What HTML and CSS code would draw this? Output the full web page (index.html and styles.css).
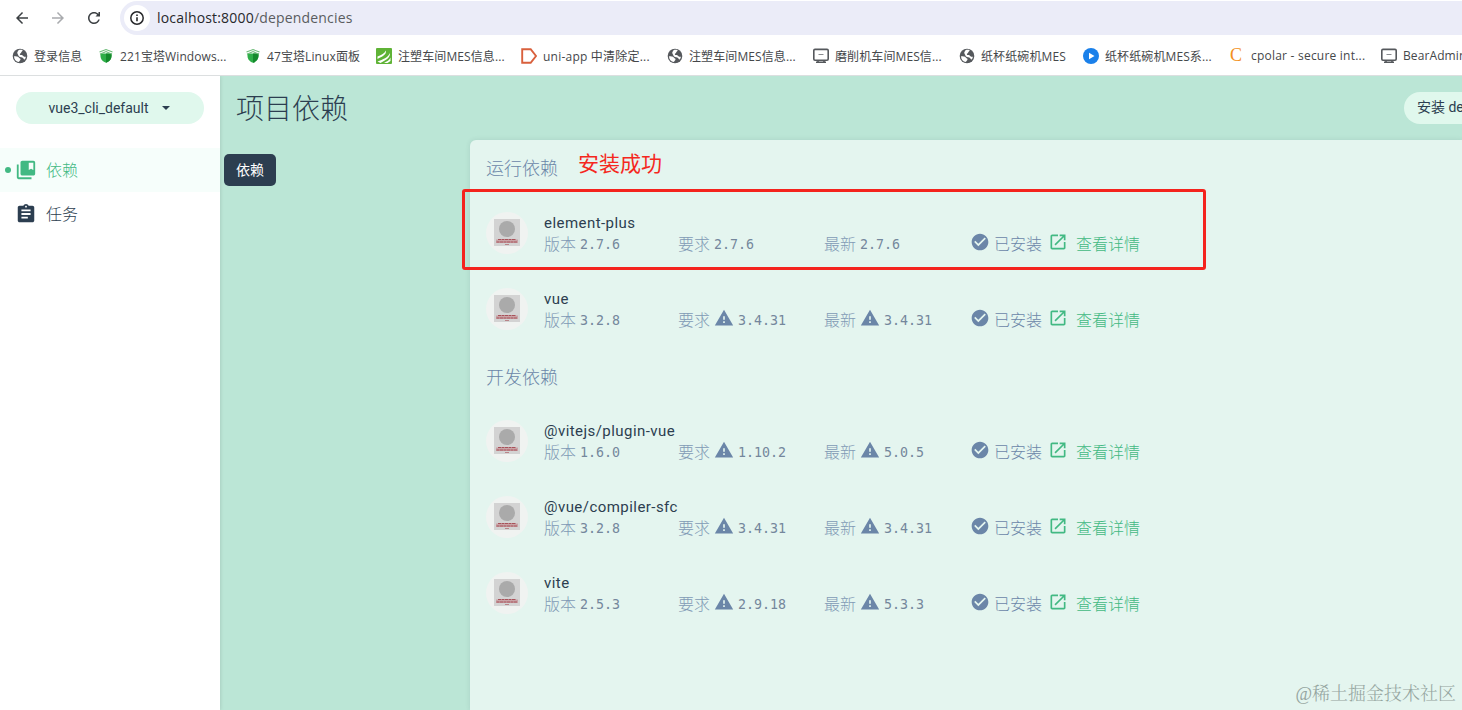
FILE: index.html
```html
<!DOCTYPE html>
<html lang="zh-CN">
<head>
    <meta charset="UTF-8">
    <title>项目依赖</title>
    <link rel="stylesheet" href="styles.css">
</head>
<body>

<!-- shared icons -->
<svg class="sprite" width="0" height="0">
    <symbol id="globe" viewBox="0 0 16 16">
        <circle cx="8" cy="8" r="7.3" fill="#55585c"/>
        <path d="M2 8.300c2 .2 4.200-.2 4.800 1.200.5 1 2 .7 1.700 2-.3 1-1.200 1.300-1.500 2.600C4 13.700 2 11.500 2 8.300zM6.500 2.200c1.200-.5 3-.5 4.200.1-.3 1.300-1.400 1.300-1.500 2.200-.2 1-1.500.8-1.300 1.900.2.800 1.800.2 2.500.9.700.8 1.400 1.700 3.500 1.500-.1 1-.5 2-1.200 2.700-1.200.1-1.300-1.600-2.400-1.900-1.600-.3-3.300-.5-3.800-1.800C6.100 6.500 5 5.500 5.300 4.300z" fill="#fff"/>
    </symbol>
    <symbol id="pot" viewBox="0 0 16 16">
        <path d="M2.500 5.500h11c.4 4.500-.8 7.500-5.500 9.300C3.300 13 2.100 10 2.500 5.500z" fill="#2eae48"/>
        <path d="M8 5.500h5.500c.4 4.500-.8 7.500-5.500 9.300z" fill="#148a2c"/>
        <path d="M1.500 4L8 1.600 14.500 4M2 6.200L8 3.600l6 2.600" stroke="#6cbb78" stroke-width="1.100" fill="none"/>
    </symbol>
    <symbol id="screen" viewBox="0 0 16 16">
        <rect x=".8" y="1.400" width="14.400" height="10.800" rx="1.200" fill="none" stroke="#55585c" stroke-width="1.600"/>
        <path d="M5.500 6.500h5" stroke="#8a8c90" stroke-width="1"/>
        <path d="M3 14.300h10M5 12.500v2M11 12.500v2" stroke="#55585c" stroke-width="1.600"/>
    </symbol>
    <symbol id="warning" viewBox="0 0 24 24">
        <path d="M1 21h22L12 2 1 21zm12-3h-2v-2h2v2zm0-4h-2v-4h2v4z"/>
    </symbol>
    <symbol id="check" viewBox="0 0 24 24">
        <path d="M12 2C6.480 2 2 6.480 2 12s4.480 10 10 10 10-4.480 10-10S17.520 2 12 2zm-2 15l-5-5 1.410-1.410L10 14.170l7.590-7.590L19 8l-9 9z"/>
    </symbol>
    <symbol id="open" viewBox="0 0 24 24">
        <path d="M19 19H5V5h7V3H5c-1.110 0-2 .9-2 2v14c0 1.100.89 2 2 2h14c1.100 0 2-.9 2-2v-7h-2v7zM14 3v2h3.590l-9.830 9.830 1.410 1.410L19 6.410V10h2V3h-7z"/>
    </symbol>
    <symbol id="avatar" viewBox="0 0 42 42">
        <circle cx="21" cy="21" r="21" fill="#f0f3f1"/>
        <rect x="8" y="7" width="26" height="27" fill="#d3d3d3"/>
        <circle cx="21" cy="17" r="8" fill="#aaa"/>
        <path d="M10 27.500h22v3.500H10z" fill="#c9a3a6"/>
        <path d="M12 27.500h18M10.500 30h21" stroke="#a8525a" stroke-width="1.200" stroke-dasharray="3 .5"/>
        <path d="M19 32.500h4" stroke="#b98488"/>
    </symbol>
</svg>

<div class="toolbar">
    <svg class="nav-icon" viewBox="0 0 24 24"><path d="M20 11H7.830l5.590-5.590L12 4l-8 8 8 8 1.410-1.410L7.830 13H20v-2z"/></svg>
    <svg class="nav-icon disabled" viewBox="0 0 24 24"><path d="M12 4l-1.410 1.410L16.170 11H4v2h12.170l-5.580 5.590L12 20l8-8z"/></svg>
    <svg class="nav-icon" viewBox="0 0 24 24"><path d="M17.650 6.350C16.200 4.900 14.210 4 12 4c-4.420 0-8 3.580-8 8s3.580 8 8 8c3.730 0 6.840-2.550 7.730-6h-2.080c-.82 2.330-3.040 4-5.650 4-3.310 0-6-2.690-6-6s2.690-6 6-6c1.660 0 3.140.69 4.220 1.780L14 10h6V4h-2v2z"/></svg>
    <div class="address">
        <span class="info">
            <svg width="16" height="16" viewBox="0 0 16 16"><circle cx="8" cy="8" r="6.200" fill="none" stroke="#27282b" stroke-width="1.500"/><path d="M8 7.200v4M8 4.500v1.500" stroke="#27282b" stroke-width="1.600"/></svg>
        </span>
        <span class="url"><b>localhost:8000</b>/dependencies</span>
    </div>
</div>

<div class="bookmarks">
    <a><svg><use href="#globe"/></svg>登录信息</a>
    <a><svg><use href="#pot"/></svg>221宝塔Windows...</a>
    <a><svg><use href="#pot"/></svg>47宝塔Linux面板</a>
    <a>
        <svg viewBox="0 0 16 16"><rect width="16" height="16" rx="1" fill="#5fb336"/><path d="M1.500 8.500C5 7 8 6 10 2.500 10.500 7 6 8.500 1.500 11zM1.500 13.500C7 11.500 12 9.500 14 5c.5 5-5 7.500-9.500 10z" fill="#fff"/><path d="M8 15c3-1.500 5.500-3 6.500-5.500V13l-3 2z" fill="#fff"/></svg>
        注塑车间MES信息...
    </a>
    <a class="latin"><svg viewBox="0 0 16 16"><path d="M1.200 1.200h8.500L15 8l-5.300 6.800H1.200z" fill="none" stroke="#d9603d" stroke-width="1.900"/></svg>uni-app 中清除定...</a>
    <a><svg><use href="#globe"/></svg>注塑车间MES信息...</a>
    <a><svg><use href="#screen"/></svg>磨削机车间MES信...</a>
    <a><svg><use href="#globe"/></svg>纸杯纸碗机MES</a>
    <a><svg viewBox="0 0 16 16"><circle cx="8" cy="8" r="8" fill="#1a80ea"/><path d="M6 4.700v6.600L11.500 8z" fill="#fff"/></svg>纸杯纸碗机MES系...</a>
    <a class="latin"><i class="cpolar">C</i>cpolar - secure int...</a>
    <a><svg><use href="#screen"/></svg>BearAdmin</a>
</div>

<div class="app">
    <div class="sidebar">
        <div class="project">vue3_cli_default <i class="arrow"></i></div>
        <div class="menu-item active">
            <i class="dot"></i>
            <svg viewBox="0 0 24 24"><path d="M4 6H2v14c0 1.100.9 2 2 2h14v-2H4V6z"/><path d="M20 2H8c-1.100 0-2 .9-2 2v12c0 1.100.9 2 2 2h12c1.100 0 2-.9 2-2V4c0-1.100-.9-2-2-2zm0 10l-2.500-1.500L15 12V4h5v8z"/></svg>
            <span class="label">依赖</span>
            <span class="tooltip">依赖</span>
        </div>
        <div class="menu-item">
            <svg viewBox="0 0 24 24"><path d="M19 3h-4.180C14.400 1.840 13.300 1 12 1c-1.300 0-2.400.84-2.820 2H5c-1.100 0-2 .9-2 2v14c0 1.100.9 2 2 2h14c1.100 0 2-.9 2-2V5c0-1.100-.9-2-2-2zm-7 0c.55 0 1 .45 1 1s-.45 1-1 1-1-.45-1-1 .45-1 1-1zm2 14H7v-2h7v2zm3-4H7v-2h10v2zm0-4H7V7h10v2z"/></svg>
            <span class="label">任务</span>
        </div>
    </div>

    <div class="main">
        <div class="header">
            <h1>项目依赖</h1>
            <div class="install">安装 devtools</div>
        </div>

        <div class="panel">
            <h2>运行依赖</h2>
            <div class="dep">
                <svg class="avatar"><use href="#avatar"/></svg>
                <div class="content">
                    <div class="name">element-plus</div>
                    <div class="info-row">
                        <div>版本 <code>2.7.6</code></div>
                        <div>要求 <code>2.7.6</code></div>
                        <div>最新 <code>2.7.6</code></div>
                        <div class="installed"><svg><use href="#check"/></svg>已安装</div>
                        <div class="link"><svg><use href="#open"/></svg>查看详情</div>
                    </div>
                </div>
            </div>
            <div class="dep">
                <svg class="avatar"><use href="#avatar"/></svg>
                <div class="content">
                    <div class="name">vue</div>
                    <div class="info-row">
                        <div>版本 <code>3.2.8</code></div>
                        <div>要求 <svg><use href="#warning"/></svg><code>3.4.31</code></div>
                        <div>最新 <svg><use href="#warning"/></svg><code>3.4.31</code></div>
                        <div class="installed"><svg><use href="#check"/></svg>已安装</div>
                        <div class="link"><svg><use href="#open"/></svg>查看详情</div>
                    </div>
                </div>
            </div>

            <h2>开发依赖</h2>
            <div class="dep">
                <svg class="avatar"><use href="#avatar"/></svg>
                <div class="content">
                    <div class="name">@vitejs/plugin-vue</div>
                    <div class="info-row">
                        <div>版本 <code>1.6.0</code></div>
                        <div>要求 <svg><use href="#warning"/></svg><code>1.10.2</code></div>
                        <div>最新 <svg><use href="#warning"/></svg><code>5.0.5</code></div>
                        <div class="installed"><svg><use href="#check"/></svg>已安装</div>
                        <div class="link"><svg><use href="#open"/></svg>查看详情</div>
                    </div>
                </div>
            </div>
            <div class="dep">
                <svg class="avatar"><use href="#avatar"/></svg>
                <div class="content">
                    <div class="name">@vue/compiler-sfc</div>
                    <div class="info-row">
                        <div>版本 <code>3.2.8</code></div>
                        <div>要求 <svg><use href="#warning"/></svg><code>3.4.31</code></div>
                        <div>最新 <svg><use href="#warning"/></svg><code>3.4.31</code></div>
                        <div class="installed"><svg><use href="#check"/></svg>已安装</div>
                        <div class="link"><svg><use href="#open"/></svg>查看详情</div>
                    </div>
                </div>
            </div>
            <div class="dep">
                <svg class="avatar"><use href="#avatar"/></svg>
                <div class="content">
                    <div class="name">vite</div>
                    <div class="info-row">
                        <div>版本 <code>2.5.3</code></div>
                        <div>要求 <svg><use href="#warning"/></svg><code>2.9.18</code></div>
                        <div>最新 <svg><use href="#warning"/></svg><code>5.3.3</code></div>
                        <div class="installed"><svg><use href="#check"/></svg>已安装</div>
                        <div class="link"><svg><use href="#open"/></svg>查看详情</div>
                    </div>
                </div>
            </div>

            <div class="note">安装成功</div>
            <div class="mark"></div>
            <div class="watermark">@稀土掘金技术社区</div>
        </div>
    </div>
</div>

</body>
</html>
```

FILE: styles.css
```css
* {
    box-sizing: border-box;
}

body {
    margin: 0;
    height: 710px;
    overflow: hidden;
    display: flex;
    flex-direction: column;
    background-color: #fff;
    font-family: Roboto, "Noto Sans CJK SC", sans-serif;
    color: #2c3e50;
}

.sprite {
    position: absolute;
}

/* browser bars */
.toolbar {
    height: 36px;
    flex: none;
    display: flex;
    align-items: center;
    padding-left: 13px;
    gap: 18px;
}

.nav-icon {
    width: 18px;
    height: 18px;
    flex: none;
    fill: #3c4043;
}

.nav-icon.disabled {
    fill: #a9abae;
}

.toolbar .address {
    flex: 1;
    height: 34px;
    margin-left: -1px;
    padding-left: 4px;
    display: flex;
    align-items: center;
    border-radius: 17px 0 0 17px;
    background-color: #ebecf8;
}

.info {
    width: 26px;
    height: 26px;
    display: flex;
    align-items: center;
    justify-content: center;
    border-radius: 50%;
    background-color: #fff;
}

.url {
    margin: -2px 0 0 7px;
    font-family: "Open Sans", sans-serif;
    font-size: 14px;
    letter-spacing: 0.18px;
    color: #5a5c60;
}

.url b {
    font-weight: normal;
    color: #27282b;
}

.bookmarks {
    height: 40px;
    flex: none;
    display: grid;
    grid-template-columns: 86px 147px 131px 145px 146px 146px 146px 124px 147px 151px 100px;
    align-items: center;
    padding-left: 12px;
    border-bottom: 1px solid #dcdfe0;
    font-family: "Open Sans", "Noto Sans CJK SC", sans-serif;
    font-size: 12px;
    letter-spacing: 0.1px;
    color: #45474a;
}

.bookmarks a {
    display: flex;
    align-items: center;
    height: 38px;
    white-space: nowrap;
}

.bookmarks .latin {
    letter-spacing: 0.22px;
}

.bookmarks svg {
    width: 16px;
    height: 16px;
    flex: none;
    margin-right: 6px;
}

.cpolar {
    width: 16px;
    margin-right: 5px;
    font: 18px "Liberation Serif", serif;
    color: #f39021;
}

/* app */
.app {
    flex: 1;
    display: flex;
    min-height: 0;
}

.sidebar {
    width: 220px;
    flex: none;
    position: relative;
    z-index: 1;
    background-color: #fff;
    box-shadow: 0 0 4px rgba(0, 0, 0, 0.15);
    clip-path: inset(0 -80px 0 0);
}

.project {
    height: 32px;
    margin: 16px 16px 24px;
    padding-right: 2px;
    display: flex;
    align-items: center;
    justify-content: center;
    border-radius: 16px;
    background-color: #e0f8ed;
    font-size: 14px;
}

.arrow {
    margin-left: 13px;
    border: 4px solid transparent;
    border-top-color: #2c3e50;
    border-bottom: none;
}

.menu-item {
    height: 44px;
    position: relative;
    display: flex;
    align-items: center;
    padding-left: 15px;
    font-size: 16px;
    font-weight: 300;
}

.menu-item svg {
    width: 22px;
    height: 22px;
    margin-right: 9px;
    fill: #2c3e50;
}

.menu-item .label {
    margin-top: -3px;
}

.menu-item.active {
    color: #42b983;
    background-color: #f6fefb;
}

.menu-item.active svg {
    fill: #42b983;
}

.dot {
    position: absolute;
    left: 5px;
    width: 6px;
    height: 6px;
    border-radius: 50%;
    background-color: #42b983;
}

.tooltip {
    position: absolute;
    left: 224px;
    top: 6px;
    width: 52px;
    height: 32px;
    line-height: 33px;
    text-align: center;
    border-radius: 5px;
    background-color: #2c3e50;
    color: #fff;
    font-size: 14px;
    font-weight: 400;
}

.main {
    flex: 1;
    min-width: 0;
    display: flex;
    flex-direction: column;
    background-color: #bbe6d6;
}

.header {
    height: 64px;
    flex: none;
    display: flex;
    align-items: center;
    justify-content: space-between;
    padding-left: 16px;
}

.header h1 {
    margin: -2px 0 0;
    font-size: 28px;
    font-weight: 300;
}

.install {
    width: 58px;
    height: 32px;
    line-height: 30px;
    padding-left: 13px;
    overflow: hidden;
    white-space: nowrap;
    border-radius: 16px 0 0 16px;
    background-color: #e0f8ed;
    font-size: 14px;
}

.panel {
    flex: 1;
    position: relative;
    margin-left: 250px;
    border-radius: 6px 0 0 0;
    background-color: #e4f5ef;
    box-shadow: 0 0 5px rgba(44, 62, 80, 0.12);
}

.panel h2 {
    height: 55px;
    line-height: 58px;
    margin: 0 0 0 16px;
    font-size: 18px;
    font-weight: 300;
    color: #6b86a8;
}

.dep + h2 {
    height: 56px;
    line-height: 61px;
}

.dep {
    height: 76px;
    display: flex;
    align-items: center;
    padding-left: 16px;
}

.avatar {
    width: 42px;
    height: 42px;
    margin-right: 16px;
}

.name {
    height: 20px;
    line-height: 22px;
    font-size: 15px;
    letter-spacing: 0.45px;
    color: #2c3e50;
}

.info-row {
    height: 22px;
    margin-top: -1px;
    margin-bottom: 1px;
    display: grid;
    grid-template-columns: 134px 146px 147px 79px 100px;
    align-items: center;
    font-size: 16px;
    font-weight: 300;
    color: #819ab5;
}

.info-row div {
    display: flex;
    align-items: center;
    white-space: nowrap;
}

.info-row svg {
    width: 20px;
    height: 20px;
    margin: -3px 0 0 4px;
    fill: #6b86a8;
}

.info-row code {
    margin: 2px 0 0 4px;
    font: 13.300px "DejaVu Sans Mono", monospace;
    color: #74879c;
}

.info-row .installed {
    color: #6b86a8;
}

.info-row .installed svg {
    margin: -3px 4px 0 -1px;
}

.info-row .link {
    color: #42b983;
}

.info-row .link svg {
    margin: -3px 8px 0 -2px;
    fill: #42b983;
}

/* notes drawn over the list */
.note {
    position: absolute;
    left: 108px;
    top: 7px;
    font-size: 21px;
    color: #f5281e;
}

.mark {
    position: absolute;
    left: -8px;
    top: 49px;
    width: 744px;
    height: 81px;
    border: 3px solid #f4231d;
    border-radius: 3px;
}

.watermark {
    position: absolute;
    right: 6px;
    bottom: 5px;
    font-family: "Liberation Serif", "Noto Serif CJK SC", "Noto Sans CJK SC", serif;
    font-size: 18px;
    font-weight: 300;
    color: #95a5a0;
}
```
